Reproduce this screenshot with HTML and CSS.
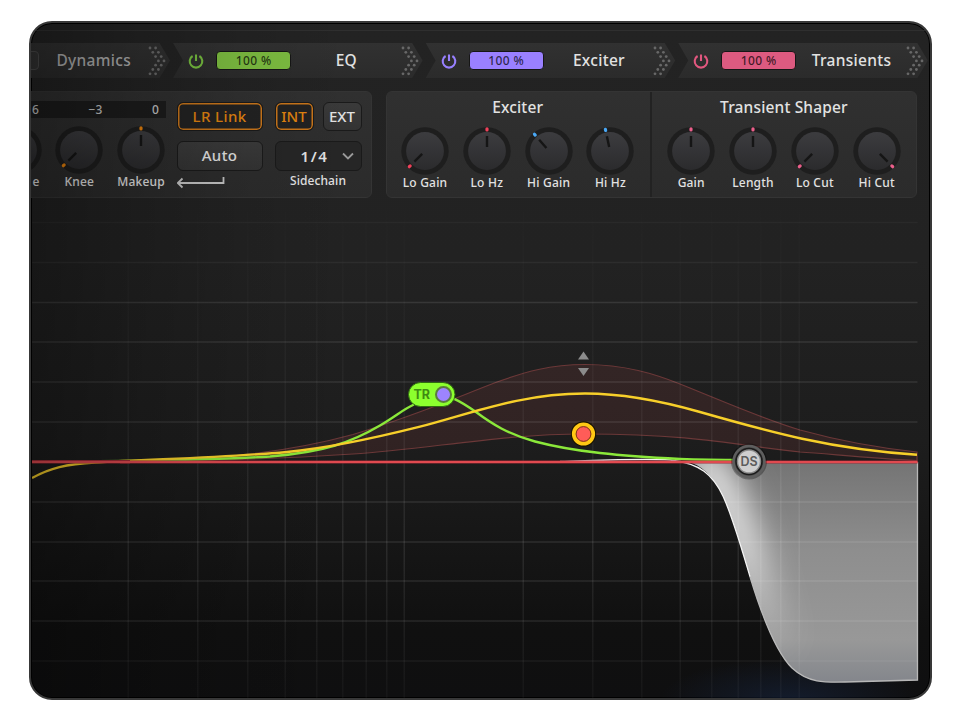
FILE: index.html
```html
<!DOCTYPE html>
<html lang="en">
<head>
  <meta charset="UTF-8" />
  <meta name="viewport" content="width=device-width, initial-scale=1.0" />
  <title>Channel Strip</title>
  <link rel="stylesheet" href="styles.css">
</head>
<body>
  <svg class="defs" width="0" height="0">
    <defs>
      <linearGradient id="knobFace" x1="0" y1="0" x2="0" y2="1">
        <stop offset="0" stop-color="#3c3c3f" />
        <stop offset="1" stop-color="#2b2b2d" />
      </linearGradient>
      <symbol id="knob" viewBox="0 0 48 48">
        <circle cx="24" cy="24" r="23.7" fill="#1e1e1e" />
        <circle cx="24" cy="24" r="18.9" fill="url(#knobFace)" />
      </symbol>
      <symbol id="power" viewBox="0 0 16 16">
        <path d="M4.600 3 A6.300 6.300 0 1 0 11.400 3 M8 1.500 V8" fill="none" stroke="currentColor" stroke-width="2.1" />
      </symbol>
      <symbol id="dots" viewBox="0 0 20 30">
        <g fill="#686868">
          <circle cx="2" cy="2" r="1.4" /><circle cx="7.6" cy="2" r="1.4" />
          <circle cx="4.8" cy="6.3" r="1.4" /><circle cx="10.4" cy="6.3" r="1.4" />
          <circle cx="7.6" cy="10.6" r="1.4" /><circle cx="13.2" cy="10.6" r="1.4" />
          <circle cx="10.4" cy="14.9" r="1.4" /><circle cx="16" cy="14.9" r="1.4" />
          <circle cx="7.6" cy="19.2" r="1.4" /><circle cx="13.2" cy="19.2" r="1.4" />
          <circle cx="4.8" cy="23.5" r="1.4" /><circle cx="10.4" cy="23.5" r="1.4" />
          <circle cx="2" cy="27.8" r="1.4" /><circle cx="7.6" cy="27.8" r="1.4" />
        </g>
      </symbol>
    </defs>
  </svg>

  <div class="plugin">
    <div class="chain">
      <div class="module off">
        <svg class="power"><use href="#power" /></svg>
        <span class="amount"></span>
        <span class="name">Dynamics</span>
        <svg class="dots"><use href="#dots" /></svg>
      </div>
      <div class="module green">
        <svg class="power"><use href="#power" /></svg>
        <span class="amount">100 %</span>
        <span class="name">EQ</span>
        <svg class="dots"><use href="#dots" /></svg>
      </div>
      <div class="module purple">
        <svg class="power"><use href="#power" /></svg>
        <span class="amount">100 %</span>
        <span class="name">Exciter</span>
        <svg class="dots"><use href="#dots" /></svg>
      </div>
      <div class="module pink">
        <svg class="power"><use href="#power" /></svg>
        <span class="amount">100 %</span>
        <span class="name">Transients</span>
        <svg class="dots"><use href="#dots" /></svg>
      </div>
    </div>

    <div class="panels">
      <div class="panel dynamics">
        <div class="comp">
          <div class="scale"><span>6</span><span>−3</span><span>0</span></div>
          <div class="knobs orange">
            <div class="knob cut"><svg><use href="#knob" /></svg><span>e</span></div>
            <div class="knob"><svg viewBox="0 0 48 48"><use href="#knob" /><g transform="rotate(-135 24 24)"><path class="hand" d="M24 9 V20" /><path class="mark" d="M24 1.8 V3" /></g></svg><span>Knee</span></div>
            <div class="knob"><svg viewBox="0 0 48 48"><use href="#knob" /><g><path class="hand" d="M24 9 V20" /><path class="mark" d="M24 1.8 V3" /></g></svg><span>Makeup</span></div>
          </div>
        </div>
        <div class="link">
          <div class="btn on">LR Link</div>
          <div class="btn auto">Auto</div>
          <svg class="arrow" viewBox="0 0 50 14"><path d="M46.500 1 V7 H1 M5.500 2.500 L0.800 7 L5.500 11.500" /></svg>
        </div>
        <div class="side">
          <div class="source"><div class="btn on">INT</div><div class="btn">EXT</div></div>
          <div class="btn select">1/4 <svg viewBox="0 0 12 8"><path d="M1 1.500 L6 6.500 L11 1.500" /></svg></div>
          <span class="caption">Sidechain</span>
        </div>
      </div>

      <div class="panel pair">
        <div class="section">
          <h2>Exciter</h2>
          <div class="knobs">
            <div class="knob red"><svg viewBox="0 0 48 48"><use href="#knob" /><g transform="rotate(-135 24 24)"><path class="hand" d="M24 9 V20" /><path class="mark" d="M24 1.8 V3" /></g></svg><span>Lo Gain</span></div>
            <div class="knob red"><svg viewBox="0 0 48 48"><use href="#knob" /><g><path class="hand" d="M24 9 V20" /><path class="mark" d="M24 1.8 V3" /></g></svg><span>Lo Hz</span></div>
            <div class="knob blue"><svg viewBox="0 0 48 48"><use href="#knob" /><g transform="rotate(-41 24 24)"><path class="hand" d="M24 9 V20" /><path class="mark" d="M24 1.8 V3" /></g></svg><span>Hi Gain</span></div>
            <div class="knob blue"><svg viewBox="0 0 48 48"><use href="#knob" /><g transform="rotate(-12 24 24)"><path class="hand" d="M24 9 V20" /><path class="mark" d="M24 1.8 V3" /></g></svg><span>Hi Hz</span></div>
          </div>
        </div>
        <div class="section">
          <h2>Transient Shaper</h2>
          <div class="knobs rose">
            <div class="knob"><svg viewBox="0 0 48 48"><use href="#knob" /><g><path class="hand" d="M24 9 V20" /><path class="mark" d="M24 1.8 V3" /></g></svg><span>Gain</span></div>
            <div class="knob"><svg viewBox="0 0 48 48"><use href="#knob" /><g><path class="hand" d="M24 9 V20" /><path class="mark" d="M24 1.8 V3" /></g></svg><span>Length</span></div>
            <div class="knob"><svg viewBox="0 0 48 48"><use href="#knob" /><g transform="rotate(-135 24 24)"><path class="hand" d="M24 9 V20" /><path class="mark" d="M24 1.8 V3" /></g></svg><span>Lo Cut</span></div>
            <div class="knob"><svg viewBox="0 0 48 48"><use href="#knob" /><g transform="rotate(135 24 24)"><path class="hand" d="M24 9 V20" /><path class="mark" d="M24 1.8 V3" /></g></svg><span>Hi Cut</span></div>
          </div>
        </div>
      </div>
    </div>

    <svg class="graph" viewBox="32 199 898 499">
      <defs>
        <linearGradient id="fadeV" gradientUnits="userSpaceOnUse" x1="0" y1="200" x2="0" y2="698">
          <stop offset="0" stop-color="#fff" stop-opacity="0" />
          <stop offset="0.4" stop-color="#fff" stop-opacity="0.04" />
          <stop offset="0.7" stop-color="#fff" stop-opacity="0.09" />
          <stop offset="1" stop-color="#fff" stop-opacity="0.03" />
        </linearGradient>
        <linearGradient id="shelf" x1="0" y1="0" x2="0" y2="1">
          <stop offset="0" stop-color="#747474" />
          <stop offset="0.4" stop-color="#8e8e8e" />
          <stop offset="0.8" stop-color="#989898" />
          <stop offset="1" stop-color="#82858b" />
        </linearGradient>
        <linearGradient id="glowFade" gradientUnits="userSpaceOnUse" x1="0" y1="462" x2="0" y2="640">
          <stop offset="0" stop-color="#fff" stop-opacity="0.95" />
          <stop offset="0.45" stop-color="#fff" stop-opacity="0.8" />
          <stop offset="1" stop-color="#fff" stop-opacity="0.1" />
        </linearGradient>
        <radialGradient id="blue">
          <stop offset="0" stop-color="#16233c" stop-opacity="0.65" />
          <stop offset="1" stop-color="#16233c" stop-opacity="0" />
        </radialGradient>
        <filter id="soft" filterUnits="userSpaceOnUse" x="620" y="400" width="300" height="300"><feGaussianBlur stdDeviation="16" /></filter>
        <clipPath id="shelfClip">
          <path d="M688 462 C700 464 713 475 723.300 496.700 C733 518 742 550 750 576.700 C761 613 775 651 792 668 C808 683 825 682.500 845 682 L917.500 680 V462 Z" />
        </clipPath>
      </defs>

      <ellipse cx="790" cy="700" rx="130" ry="42" fill="url(#blue)" />

      <!-- boost range of the selected band -->
      <path class="range" d="M150 461 C230 459 300 449 353 434.500 C420 414 455 398 497 382 C525 372 550 364.500 585 364.500 C625 364.500 655 374 680 384 C725 402 760 418 800 430 C840 441 880 448 917 452 V460.500 C870 458 830 454 800 452 C745 447 700 434 585 434 C500 434 430 449 353 454 C290 458 230 461 150 461 Z" />

      <!-- band filled below 0 dB -->
      <g clip-path="url(#shelfClip)">
        <rect x="685" y="461" width="233" height="224" fill="url(#shelf)" />
        <path class="glow" d="M694 455 C706 464 717 475 727 496.700 C737 518 746 550 754 576.700 C763 605 772 635 783 650" filter="url(#soft)" />
      </g>
      <path class="edge" d="M560 461.500 C610 460 640 458.500 670 460 C700 463 713 475 723.300 496.700 C733 518 742 550 750 576.700" />
      <path class="edge faint" d="M750 576.700 C761 613 775 651 792 668 C808 683 825 682.500 845 682 L917.500 680 V462" />

      <g class="rows">
        <path opacity="0.35" d="M32 222.500 H917.500" />
        <path opacity="0.5" d="M32 262.500 H917.500" />
        <path d="M32 302.500 H917.500 M32 342 H917.500 M32 382 H917.500 M32 422 H917.500 M32 502 H917.500 M32 542 H917.500 M32 581 H917.500 M32 621 H917.500" />
        <path opacity="0.5" d="M32 661 H917.500" />
      </g>
      <g fill="url(#fadeV)">
        <rect x="127.500" y="200" width="1.500" height="498" /><rect x="197" y="200" width="1.500" height="498" />
        <rect x="247" y="200" width="1.500" height="498" /><rect x="284.500" y="200" width="1.500" height="498" />
        <rect x="316" y="200" width="1.500" height="498" /><rect x="342" y="200" width="1.500" height="498" />
        <rect x="365.500" y="200" width="1.500" height="498" /><rect x="386" y="200" width="1.500" height="498" />
        <rect x="403.500" y="200" width="1.500" height="498" /><rect x="522.500" y="200" width="1.500" height="498" />
        <rect x="592" y="200" width="1.500" height="498" /><rect x="641" y="200" width="1.500" height="498" />
        <rect x="679.500" y="200" width="1.500" height="498" /><rect x="711" y="200" width="1.500" height="498" />
        <rect x="737.500" y="200" width="1.500" height="498" /><rect x="760" y="200" width="1.500" height="498" />
        <rect x="780" y="200" width="1.500" height="498" /><rect x="798.500" y="200" width="1.500" height="498" />
      </g>

      <path class="curve green" d="M32 461.500 C110 461.500 210 460 270 456.500 C325 452 352 442 380 425.500 C396 416 404 409 413 405 C420 398 425 394.500 432 394.500 C450 394.500 460 401 476 412 C492 424 508 434 535 441.500 C575 452 620 456 680 459 C705 460 725 460 745 460" />
      <path class="curve yellow" d="M32 478 C50 468 66 464 95 462.500 C150 459 220 458 287 452 C330 448 375 438 420 426.700 C470 414 520 393.500 585 393.500 C625 393.500 665 402 700 412 C770 432 830 449 917 454.700" />
      <path class="zero left" d="M32 461.700 H130" />
      <path class="zero" d="M120 462 H917.500" />
      <path class="zero-core" d="M32 461.900 H917.500" />

      <path class="tri" d="M583.500 351.500 L589 359.500 H578 Z M583.500 376 L589 368 H578 Z" />

      <g class="node-tr">
        <rect x="408.500" y="382.500" width="46.500" height="24" rx="12" />
        <circle cx="443.500" cy="394.500" r="7.500" />
        <text x="413.500" y="398.700">TR</text>
      </g>
      <g>
        <circle cx="583.500" cy="434" r="12.700" fill="#1a1400" />
        <circle cx="583.500" cy="434" r="9.700" fill="#ff5c58" stroke="#ffc814" stroke-width="3.800" />
        <circle cx="583.500" cy="434" r="7.400" fill="none" stroke="#7a3a10" stroke-width="1" />
      </g>
      <g class="node-ds">
        <circle cx="749" cy="461.500" r="18" fill="#000" fill-opacity="0.3" />
        <circle cx="749" cy="461.500" r="15.500" fill="#4a4a4a" stroke="#5e5e5e" stroke-width="2.500" />
        <circle cx="749" cy="461.500" r="13" fill="#8a8a8a" stroke="#1c1c1c" stroke-width="1.600" />
        <circle cx="749" cy="461.500" r="10.800" fill="#cfcfcf" />
        <text x="749" y="466">DS</text>
      </g>
    </svg>
    <div class="shade"></div>
  </div>
</body>
</html>
```

FILE: styles.css
```css
* {
  box-sizing: border-box;
}
body {
  margin: 0;
  padding: 21px 0 0 29px;
  background: #fff;
  font-family: "Noto Sans", "Open Sans", sans-serif;
  font-weight: 500;
  color: #e2e2e2;
  overflow: hidden;
}
.defs {
  position: absolute;
}
.plugin {
  position: relative;
  width: 903px;
  height: 679px;
  border: 2px solid #383838;
  border-radius: 23px;
  box-shadow: inset 0 0 0 1px #000;
  background: linear-gradient(#232323, #222 35%, #1d1d1d 62%, #101010 90%, #0f0f10);
  overflow: hidden;
}

/* module chain */
.chain {
  display: flex;
  gap: 3.1px;
  height: 55px;
  margin-top: 7px;
  padding-top: 12px;
  border-top: 1px solid #2f2f2f;
  margin-left: -110.5px;
}
.module {
  flex: none;
  display: flex;
  align-items: center;
  width: 249.5px;
  height: 35px;
  padding: 0 2px 0 15px;
  background: linear-gradient(#313131, #2b2b2b);
  clip-path: polygon(0 0, 95.8% 0, 100% 50%, 95.8% 100%, 0 100%, 4% 50%);
}
.power {
  width: 16px;
  height: 16px;
}
.amount {
  width: 75px;
  height: 19px;
  margin-left: 12px;
  border: 1px solid #161616;
  border-radius: 4px;
  font-size: 12px;
  line-height: 17px;
  letter-spacing: 0.4px;
  text-align: center;
  color: rgba(0, 0, 0, 0.72);
}
.name {
  flex: 1;
  padding: 0 0 2px 1px;
  font-size: 15.5px;
  line-height: 20px;
  letter-spacing: 0.3px;
  text-align: center;
}
.module .dots {
  width: 20px;
  height: 30px;
}
.off .name { color: #b0b0b0; }
.off .amount { background: #333; border-color: #4a4a4a; }
.green .power { color: #76bd3f; }
.green .amount { background: #7cbc40; }
.purple .power { color: #9880ff; }
.purple .amount { background: #9a80ff; }
.pink .power { color: #e2577f; }
.pink .amount { background: #dd5a80; }

/* control panels */
.panels {
  display: flex;
  gap: 14px;
  height: 107px;
  margin: 6px 13px 0 -6px;
}
.panel {
  display: flex;
  border: 1px solid #343434;
  border-radius: 6px;
  background: linear-gradient(#303030, #2b2b2b);
}
.dynamics {
  width: 347px;
}
.pair {
  width: 532px;
}
.comp {
  width: 140px;
}
.scale {
  display: flex;
  justify-content: space-between;
  width: 140px;
  height: 17px;
  margin-top: 9px;
  padding: 0 7px 0 6px;
  background: #1c1c1c;
  font-size: 12px;
  line-height: 17px;
  color: #c4c4c4;
}
.knobs {
  display: flex;
  justify-content: center;
}
.knob {
  flex: none;
  width: 61.8px;
  text-align: center;
  font-size: 12px;
  line-height: 14px;
  letter-spacing: 0.2px;
  white-space: nowrap;
}
.knob svg {
  display: block;
  width: 48px;
  height: 48px;
  margin: 0 auto;
}
.knob span {
  display: block;
  margin-top: 1px;
}
.comp .knobs {
  justify-content: flex-end;
  width: 146px;
  margin-top: 8px;
}
.knob.cut span {
  padding-left: 37px;
}
.hand {
  stroke: #151515;
  stroke-width: 2.4;
}
.mark {
  stroke: currentColor;
  stroke-width: 3.2;
  stroke-linecap: round;
}
.orange .mark { color: #e8820c; }
.red .mark { color: #f0415a; }
.blue .mark { color: #4aa8f5; }
.rose .mark { color: #ec5f8b; }

.link {
  width: 86px;
  margin: 10px 0 0 10.5px;
}
.side {
  width: 87px;
  margin: 10px 0 0 12px;
  text-align: center;
}
.btn {
  height: 29px;
  border: 1px solid #1a1a1a;
  border-radius: 6px;
  background: linear-gradient(#3a3a3a, #333);
  font-size: 15px;
  line-height: 26px;
  text-align: center;
}
.btn.on {
  box-shadow: inset 0 0 0 1.5px #c8751a;
  background: #222;
  color: #e0820f;
}
.auto,
.select {
  height: 30px;
  margin-top: 10px;
}
.link .btn {
  letter-spacing: 0.4px;
}
.arrow {
  display: block;
  width: 50px;
  height: 14px;
  margin-top: 5px;
}
.arrow path,
.select path {
  fill: none;
  stroke: #c4c4c4;
  stroke-width: 1.8;
}
.select path {
  stroke: #999;
}
.source {
  display: flex;
  justify-content: space-between;
}
.source .btn {
  width: 39px;
}
.btn.select {
  display: flex;
  align-items: center;
  justify-content: flex-end;
  gap: 13px;
  padding-right: 7px;
  background: #262626;
  font-weight: 600;
  letter-spacing: 1.6px;
}
.select svg {
  width: 12px;
  height: 8px;
}
.caption {
  display: block;
  margin-top: 3px;
  font-size: 12px;
  line-height: 14px;
  letter-spacing: 0.1px;
}
.section {
  flex: 1;
}
.section:first-child {
  margin-left: -1px;
}
.section + .section {
  border-left: 2px solid #222;
}
.section h2 {
  margin: 3px 0 0;
  height: 32px;
  font-size: 15.5px;
  font-weight: 500;
  line-height: 25px;
  letter-spacing: 0.15px;
  text-align: center;
}

/* EQ graph */
.graph {
  position: absolute;
  left: 1px;
  top: 176px;
  width: 898px;
  height: 499px;
}
.range {
  fill: #ff6060;
  fill-opacity: 0.09;
  stroke: #6b3838;
  stroke-width: 1.2;
}
.rows path {
  stroke: #fff;
  stroke-opacity: 0.1;
  stroke-width: 1.7;
}
.glow {
  fill: none;
  stroke: url(#glowFade);
  stroke-width: 30;
}
.edge {
  fill: none;
  stroke: #f4f4f4;
  stroke-width: 1.3;
}
.edge.faint {
  stroke: #b8b8b8;
}
.curve {
  fill: none;
  stroke-width: 2.4;
}
.curve.green { stroke: #8be83a; }
.curve.yellow { stroke: #f7cf2a; }
.zero {
  stroke: #a02c36;
  stroke-width: 3;
}
.zero.left {
  stroke-width: 3.6;
}
.zero-core {
  stroke: #e14a50;
  stroke-width: 2;
}
.tri {
  fill: #8c8c8c;
}
.node-tr rect {
  fill: #8cff2e;
  stroke: #2f6a10;
  stroke-width: 1;
}
.node-tr circle {
  fill: #9d84ff;
  stroke: #5a7c3c;
  stroke-width: 2;
}
.node-tr text {
  font-family: Inter, sans-serif;
  font-size: 12.5px;
  font-weight: 700;
  fill: #3f8a12;
}
.node-ds text {
  font-family: Inter, sans-serif;
  font-size: 12.5px;
  font-weight: 600;
  text-anchor: middle;
  fill: #5c5c5c;
}

/* left side falls into shadow */
.shade {
  position: absolute;
  inset: 0;
  background: linear-gradient(90deg, rgba(0, 0, 0, 0.33), rgba(0, 0, 0, 0.18) 12%, rgba(0, 0, 0, 0.06) 24%, transparent 36%);
}
```
